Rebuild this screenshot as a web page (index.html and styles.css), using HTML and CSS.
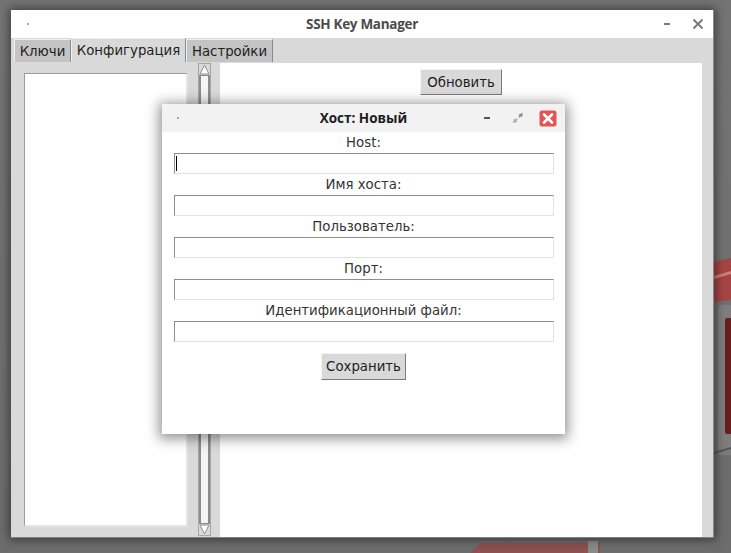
FILE: index.html
```html
<!DOCTYPE html>
<html lang="ru">
<head>
<meta charset="utf-8">
<title>SSH Key Manager</title>
<link rel="stylesheet" href="styles.css">
</head>
<body>
<svg class="wallpaper" width="731" height="553" viewBox="0 0 731 553" xmlns="http://www.w3.org/2000/svg">
  <defs>
    <linearGradient id="bg" x1="0" y1="0" x2="0" y2="1">
      <stop offset="0" stop-color="#747474"/>
      <stop offset="1" stop-color="#6c6c6c"/>
    </linearGradient>
  </defs>
  <rect width="731" height="553" fill="url(#bg)"/>
  <path d="M714 262 L731 258 L731 300 L714 302 Z" fill="#a64444"/>
  <path d="M714 276 L731 271 L731 274 L714 279 Z" fill="#c98080"/>
  <rect x="718" y="305" width="20" height="150" rx="4" fill="#7d7d7d"/>
  <rect x="725" y="318" width="10" height="116" rx="2" fill="#6a1d1d"/>
  <path d="M714 452 L731 447 L731 449 L714 454 Z" fill="#555"/>
  <path d="M470 553 L480 543 L600 543 L600 553 Z" fill="#8e5050"/>
  <rect x="588" y="541" width="10" height="12" fill="#8a8a8a"/>
</svg>

<div class="window">
  <div class="titlebar">
    <span class="tb-dot"></span>
    <span class="tb-title">SSH Key Manager</span>
    <div class="tb-controls">
      <svg class="tb-min" width="8" height="4" viewBox="0 0 8 4"><rect x="1" y="1" width="6" height="2" fill="#7a7a7a"/></svg>
      <svg class="tb-close" width="12" height="12" viewBox="0 0 12 12"><path d="M1.5 1.5 L10.5 10.5 M10.5 1.5 L1.5 10.5" stroke="#7a7a7a" stroke-width="2"/></svg>
    </div>
  </div>
  <div class="tabbar">
    <div class="tab tab-keys">Ключи</div>
    <div class="tab tab-conf active">Конфигурация</div>
    <div class="tab tab-set">Настройки</div>
  </div>
  <div class="content">
    <div class="leftpane">
      <div class="listbox"></div>
      <div class="scrollbar">
        <div class="sb-arrow sb-up"><svg width="11" height="11" viewBox="0 0 11 11"><path d="M5.5 1 L10 10 L1 10 Z" fill="#fff" stroke="#8c8c8c" stroke-width="1"/></svg></div>
        <div class="sb-slider"></div>
        <div class="sb-arrow sb-down"><svg width="11" height="11" viewBox="0 0 11 11"><path d="M1 1 L10 1 L5.5 10 Z" fill="#fff" stroke="#8c8c8c" stroke-width="1"/></svg></div>
      </div>
    </div>
    <div class="rightpane">
      <button class="btn btn-refresh">Обновить</button>
    </div>
    <div class="rightstrip"></div>
  </div>
</div>

<div class="dialog">
  <div class="dlg-titlebar">
    <span class="dlg-dot"></span>
    <span class="dlg-title">Хост: Новый</span>
    <div class="dlg-controls">
      <svg class="dlg-min" width="8" height="4" viewBox="0 0 8 4"><rect x="1" y="1" width="6" height="2" fill="#555"/></svg>
      <svg class="dlg-restore" width="12" height="12" viewBox="0 0 12 12"><path d="M11 1 L6.5 2.2 L9.8 5.5 Z" fill="#8a8a8a"/><path d="M8.2 3.8 L6.8 5.2" stroke="#8a8a8a" stroke-width="1.5"/><path d="M1 11 L5.5 9.8 L2.2 6.5 Z" fill="#a8a8a8"/><path d="M3.8 8.2 L5.2 6.8" stroke="#a8a8a8" stroke-width="1.5"/></svg>
      <svg class="dlg-close" width="18" height="17" viewBox="0 0 18 17"><rect x="0.5" y="0.5" width="17" height="16" rx="2.5" fill="#e45454"/><path d="M5 4.5 L13 12.5 M13 4.5 L5 12.5" stroke="#fff" stroke-width="2.6" stroke-linecap="round"/></svg>
    </div>
  </div>
  <div class="dlg-body">
    <label class="field-label">Host:</label>
    <div class="entry"><span class="caret"></span></div>
    <label class="field-label">Имя хоста:</label>
    <div class="entry"></div>
    <label class="field-label">Пользователь:</label>
    <div class="entry"></div>
    <label class="field-label">Порт:</label>
    <div class="entry"></div>
    <label class="field-label">Идентификационный файл:</label>
    <div class="entry"></div>
    <button class="btn btn-save">Сохранить</button>
  </div>
</div>
</body>
</html>
```
FILE: styles.css
```css
* { box-sizing: border-box; }

html, body {
  margin: 0;
  padding: 0;
}

body {
  width: 731px;
  height: 553px;
  position: relative;
  overflow: hidden;
  font-family: "DejaVu Sans", "Noto Sans", sans-serif;
  font-size: 13.3px;
  color: #2a2a2a;
}

.wallpaper {
  position: absolute;
  left: 0;
  top: 0;
}

/* main window */
.window {
  position: absolute;
  left: 11px;
  top: 10px;
  width: 703px;
  height: 528px;
  display: flex;
  flex-direction: column;
  background: #d9d9d9;
  border-right: 1px solid #8a8a8a;
  border-bottom: 1px solid #7f7f7f;
  box-shadow: 0 0 9px 2px rgba(0, 0, 0, 0.45);
}

.titlebar {
  height: 28px;
  flex: 0 0 28px;
  background: #ffffff;
  display: flex;
  align-items: center;
  position: relative;
  padding-left: 16px;
}

.tb-dot {
  width: 2px;
  height: 2px;
  background: #8c8c8c;
  border-radius: 1px;
}

.tb-title {
  position: absolute;
  left: 0;
  right: 0;
  text-align: center;
  font-family: "Open Sans", "Noto Sans", sans-serif;
  font-weight: 700;
  font-size: 13.5px;
  letter-spacing: -0.3px;
  color: #4b4b4b;
  pointer-events: none;
}

.tb-controls {
  margin-left: auto;
  display: flex;
  align-items: center;
  gap: 21px;
  padding-right: 9px;
}

.tabbar {
  height: 24px;
  flex: 0 0 24px;
  display: flex;
  align-items: flex-end;
  padding-left: 3px;
  background: #d9d9d9;
}

.tab {
  height: 23px;
  display: flex;
  align-items: center;
  justify-content: center;
  background: #c4c4c4;
  border-top: 1px solid #eeeeee;
  border-left: 1px solid #eeeeee;
  border-right: 1px solid #8a8a8a;
  color: #1e1e1e;
  font-size: 13.3px;
}

.tab.active {
  background: #d9d9d9;
  height: 24px;
}

.tab-keys { width: 57px; }
.tab-conf { width: 115px; }
.tab-set { width: 87px; }

.content {
  flex: 1;
  display: flex;
  min-height: 0;
}

.leftpane {
  width: 209px;
  flex: 0 0 209px;
  display: flex;
  gap: 10px;
  padding: 0 9px 0 13px;
  background: #d9d9d9;
}

.listbox {
  width: 164px;
  margin: 11px 0 10px 0;
  background: #ffffff;
  border-top: 1px solid #9c9c9c;
  border-left: 1px solid #9c9c9c;
  border-bottom: 2px solid #e4e4e4;
  border-right: 2px solid #e4e4e4;
}

.scrollbar {
  width: 13px;
  margin: 1px 0;
  display: flex;
  flex-direction: column;
  background: #c4c4c4;
  border: 1px solid #a5a5a5;
}

.sb-arrow {
  height: 11px;
  flex: 0 0 11px;
  display: flex;
  justify-content: center;
  background: #d9d9d9;
}

.sb-slider {
  flex: 1;
  background: #f4f4f4;
  border-left: 2px solid #8c8c8c;
  border-right: 2px solid #8c8c8c;
  border-top: 1px solid #8c8c8c;
  border-bottom: 1px solid #8c8c8c;
}

.rightpane {
  flex: 1;
  background: #ffffff;
  margin-top: 1px;
  display: flex;
  flex-direction: column;
  align-items: center;
  padding-top: 6px;
}

.rightstrip {
  width: 11px;
  flex: 0 0 11px;
  background: #d9d9d9;
  margin-top: 1px;
}

.btn {
  font-family: "DejaVu Sans", "Noto Sans", sans-serif;
  font-size: 13.3px;
  color: #1e1e1e;
  background: #d9d9d9;
  border-style: solid;
  border-width: 1px;
  border-color: #f4f4f4 #7a7a7a #7a7a7a #f4f4f4;
  padding: 0;
  display: flex;
  align-items: center;
  justify-content: center;
}

.btn-refresh {
  width: 82px;
  height: 26px;
}

/* dialog */
.dialog {
  position: absolute;
  left: 162px;
  top: 104px;
  width: 403px;
  height: 330px;
  background: #ffffff;
  display: flex;
  flex-direction: column;
  box-shadow: 0 2px 12px 3px rgba(0, 0, 0, 0.42);
}

.dlg-titlebar {
  height: 28px;
  flex: 0 0 28px;
  background: #f2f2f2;
  display: flex;
  align-items: center;
  position: relative;
  padding-left: 15px;
}

.dlg-dot {
  width: 2px;
  height: 2px;
  background: #8c8c8c;
  border-radius: 1px;
}

.dlg-title {
  position: absolute;
  left: 0;
  right: 0;
  text-align: center;
  font-family: "Open Sans", "Noto Sans", sans-serif;
  font-weight: 700;
  font-size: 13.5px;
  color: #1c1c1c;
  pointer-events: none;
}

.dlg-controls {
  margin-left: auto;
  display: flex;
  align-items: center;
  padding-right: 8px;
}

.dlg-min { margin-right: 21px; }
.dlg-restore { margin-right: 15px; }

.dlg-body {
  display: flex;
  flex-direction: column;
  align-items: center;
}

.field-label {
  height: 21px;
  line-height: 21px;
  color: #333333;
}

.entry {
  width: 380px;
  height: 21px;
  background: #ffffff;
  border-style: solid;
  border-width: 1px;
  border-color: #8e8e8e #e2e2e2 #e2e2e2 #8e8e8e;
  display: flex;
  align-items: center;
  padding-left: 1px;
}

.caret {
  width: 1px;
  height: 15px;
  background: #000000;
}

.btn-save {
  width: 85px;
  height: 27px;
  margin-top: 11px;
}
```
